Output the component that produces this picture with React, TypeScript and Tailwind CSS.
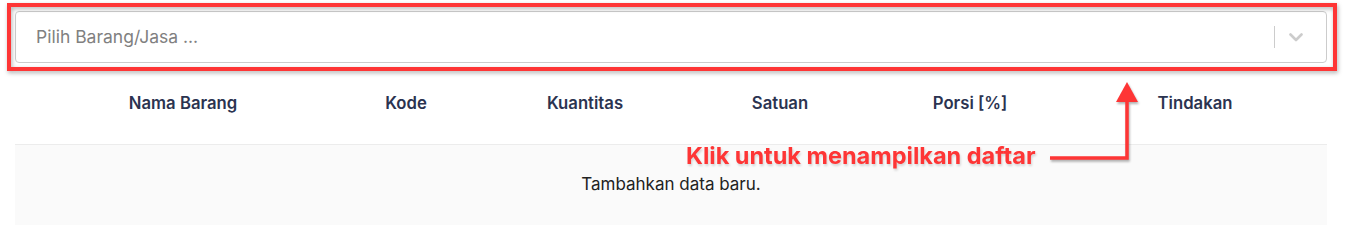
export default function App() {
  const cols = ["Nama Barang", "Kode", "Kuantitas", "Satuan", "Porsi [%]", "Tindakan"];
  return (
    <div
      className="relative h-[229px] w-[1349px] overflow-hidden bg-white"
      style={{ fontFamily: "Inter, 'Liberation Sans', sans-serif" }}
    >
      <div className="pl-[15px] pr-[22px] pt-[11px]">
        {/* select */}
        <div className="flex h-[52px] items-center rounded-[4px] border border-[#cccccc] bg-white">
          <div className="flex-1 pl-[20px] pt-px text-[17.5px] text-[#808080]">Pilih Barang/Jasa ...</div>
          <div className="h-[22px] w-px bg-[#cccccc]" />
          <div className="flex items-center pl-[14px] pr-[23px] text-[#cccccc]">
            <svg width="14" height="9" viewBox="0 0 14 9" fill="none">
              <path d="M1.5 1.5 L7 7 L12.5 1.5" stroke="currentColor" strokeWidth="2.6" strokeLinecap="round" strokeLinejoin="round" />
            </svg>
          </div>
        </div>

        {/* table */}
        <div className="grid h-[82px] grid-cols-[336px_110px_248px_142px_238px_1fr] items-center border-b border-[#ececec] text-[16.7px] font-semibold text-[#2b3350]">
          {cols.map((c, i) => (
            <div key={c} className={i === 5 ? "pr-[26px] text-center" : "text-center"}>
              {c}
            </div>
          ))}
        </div>
        <div className="flex h-[80px] items-center justify-center bg-[#fafafa] text-[17px] text-[#222222]">
          Tambahkan data baru.
        </div>
      </div>

      {/* annotation overlay */}
      <div className="absolute left-[7px] top-[3px] h-[68px] w-[1330px] border-[4px] border-[#fe3535] [filter:drop-shadow(1px_2px_2px_rgba(0,0,0,0.3))]" />
      <div className="absolute left-[686px] top-[141px] text-[23.5px] font-bold leading-[30px] text-[#fe3535] [filter:drop-shadow(1px_2px_1px_rgba(0,0,0,0.15))]">
        Klik untuk menampilkan daftar
      </div>
      <svg
        className="absolute left-[1045px] top-[78px] [filter:drop-shadow(1px_2px_1px_rgba(0,0,0,0.3))]"
        width="100"
        height="90"
        viewBox="0 0 100 90"
      >
        <path d="M5 80 H82 V20" fill="none" stroke="#fe3535" strokeWidth="3.5" />
        <path d="M82 4 L93 24 L71 24 Z" fill="#fe3535" />
      </svg>
    </div>
  );
}
